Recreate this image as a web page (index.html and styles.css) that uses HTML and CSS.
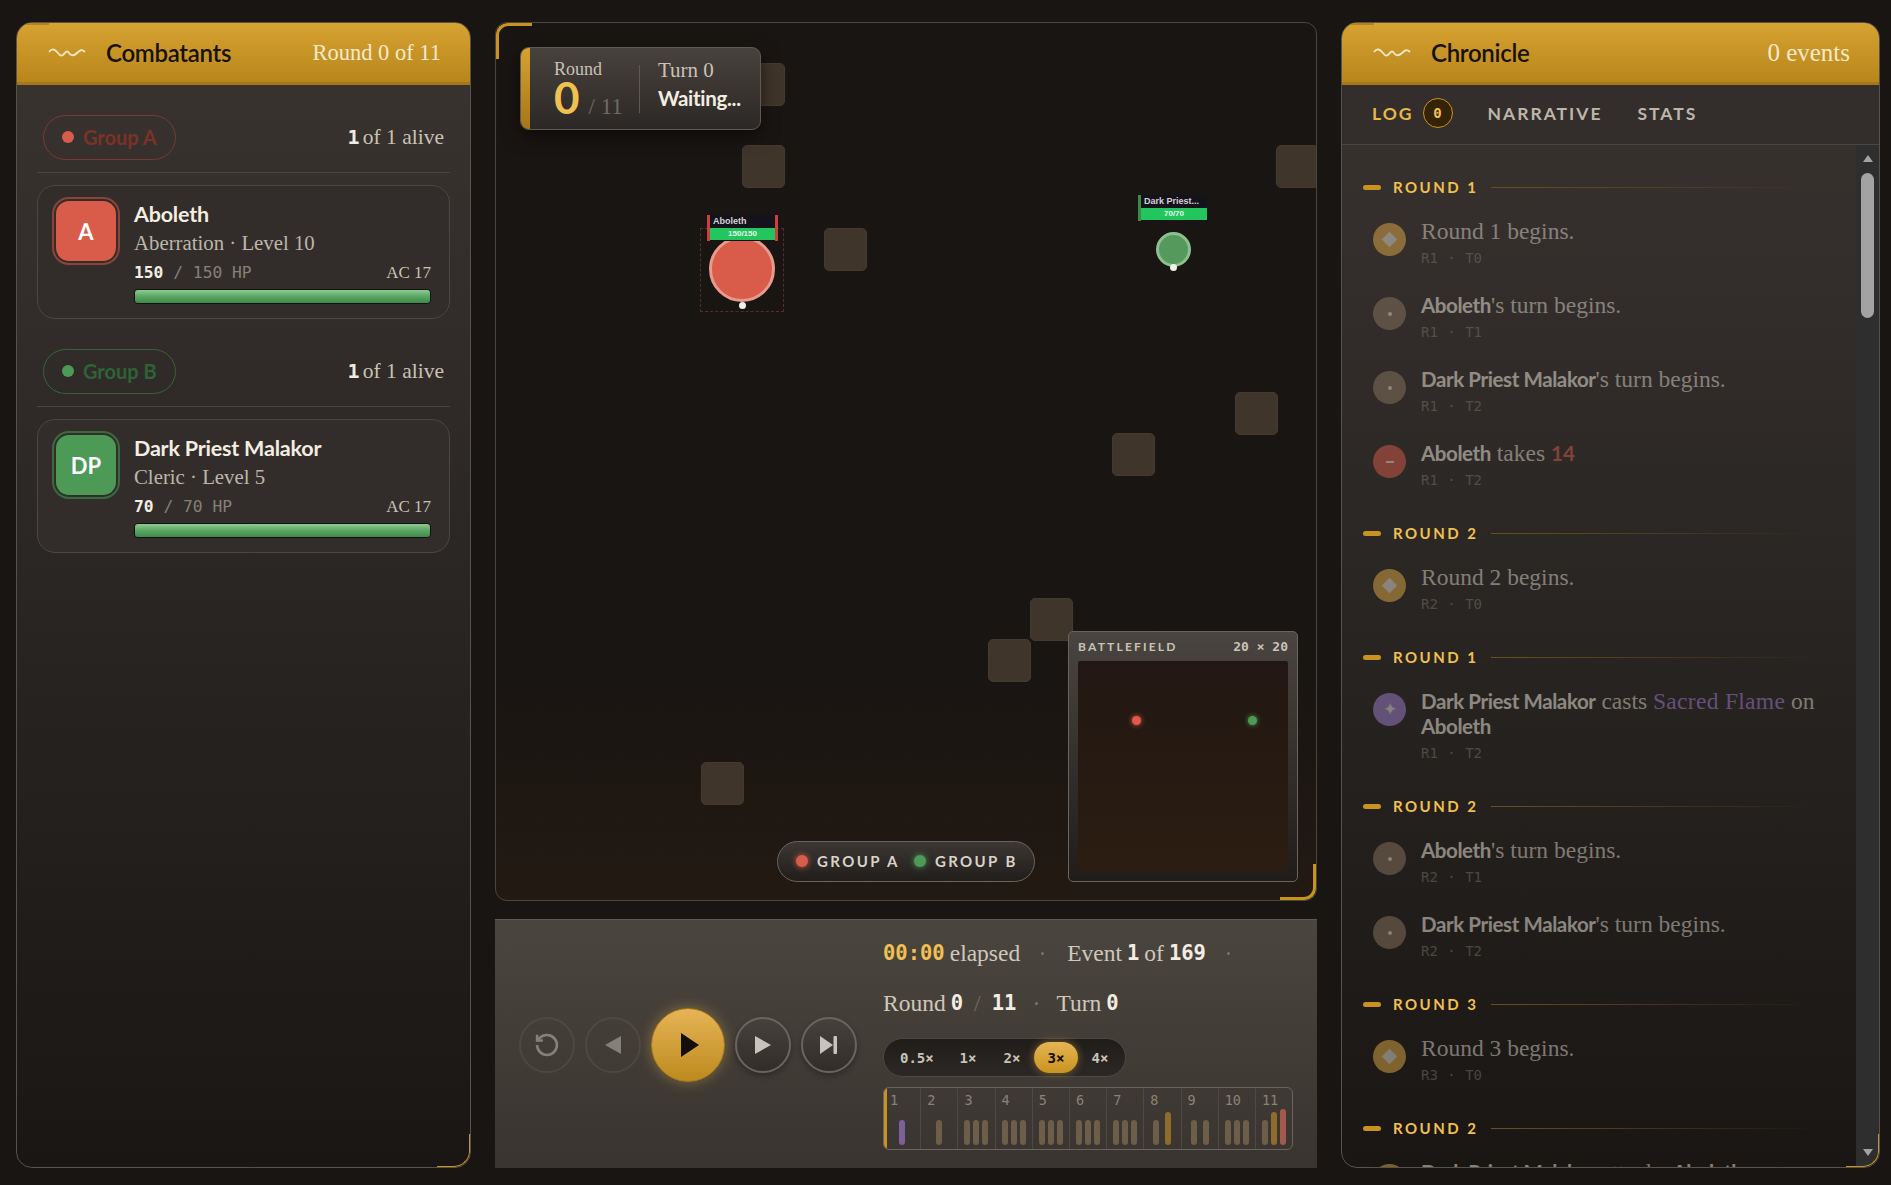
FILE: index.html
```html
<!DOCTYPE html>
<html lang="en">
<head>
    <meta charset="UTF-8">
    <meta name="viewport" content="width=device-width, initial-scale=1.0">
    <title>Combat Replay</title>
    <link rel="stylesheet" href="styles.css">
</head>
<body>
    <div class="app">
        <aside class="panel">
            <header class="panel-head">
                <svg class="wave" viewBox="0 0 38 12" aria-hidden="true"><path d="M1 5 C4 1 7 2 10 6 S14 9 17 6 C18 4 20 4 21 6 C23 9 26 9 29 6 S34 2 37 5"/></svg>
                <h2>Combatants</h2>
                <span class="head-note">Round 0 of 11</span>
            </header>
            <div class="roster">
                <section class="group">
                    <div class="group-row">
                        <span class="group-pill pill-a"><i></i>Group A</span>
                        <span class="alive"><b>1</b> of 1 alive</span>
                    </div>
                    <article class="card">
                        <div class="avatar avatar-a">A</div>
                        <div class="card-body">
                            <h3>Aboleth</h3>
                            <p class="card-sub">Aberration · Level 10</p>
                            <div class="hp-row">
                                <span class="hp-text"><b>150</b> / 150 HP</span>
                                <span class="ac">AC 17</span>
                            </div>
                            <div class="hp-bar"><div class="hp-fill"></div></div>
                        </div>
                    </article>
                </section>
                <section class="group">
                    <div class="group-row">
                        <span class="group-pill pill-b"><i></i>Group B</span>
                        <span class="alive"><b>1</b> of 1 alive</span>
                    </div>
                    <article class="card">
                        <div class="avatar avatar-b">DP</div>
                        <div class="card-body">
                            <h3>Dark Priest Malakor</h3>
                            <p class="card-sub">Cleric · Level 5</p>
                            <div class="hp-row">
                                <span class="hp-text"><b>70</b> / 70 HP</span>
                                <span class="ac">AC 17</span>
                            </div>
                            <div class="hp-bar"><div class="hp-fill"></div></div>
                        </div>
                    </article>
                </section>
            </div>
        </aside>

        <main class="stage">
            <div class="arena">
                <div class="obstacle" style="left:246px;top:40px"></div>
                <div class="obstacle" style="left:246px;top:122px"></div>
                <div class="obstacle" style="left:328px;top:205px"></div>
                <div class="obstacle" style="left:780px;top:122px"></div>
                <div class="obstacle" style="left:739px;top:369px"></div>
                <div class="obstacle" style="left:616px;top:410px"></div>
                <div class="obstacle" style="left:534px;top:575px"></div>
                <div class="obstacle" style="left:492px;top:616px"></div>
                <div class="obstacle" style="left:205px;top:739px"></div>

                <div class="hud">
                    <div class="hud-round">
                        <span class="hud-label">Round</span>
                        <div class="hud-num"><strong>0</strong><span>/ 11</span></div>
                    </div>
                    <div class="hud-turn">
                        <span class="hud-label hud-label-turn">Turn 0</span>
                        <strong>Waiting...</strong>
                    </div>
                </div>

                <div class="token-zone"></div>
                <div class="token-label label-a">
                    <span>Aboleth</span>
                    <div class="token-hp">150/150</div>
                </div>
                <div class="token token-a"><i></i></div>

                <div class="token-label label-b">
                    <span>Dark Priest...</span>
                    <div class="token-hp">70/70</div>
                </div>
                <div class="token token-b"><i></i></div>

                <div class="legend">
                    <span class="legend-item"><i class="dot-a"></i>GROUP A</span>
                    <span class="legend-item"><i class="dot-b"></i>GROUP B</span>
                </div>

                <div class="minimap">
                    <div class="minimap-head"><span>BATTLEFIELD</span><code>20 × 20</code></div>
                    <div class="minimap-map">
                        <i class="mini-a"></i>
                        <i class="mini-b"></i>
                    </div>
                </div>
            </div>

            <div class="controls">
                <div class="transport">
                    <button class="ctl ctl-off" aria-label="Restart">
                        <svg width="28" height="28" viewBox="0 0 24 24" class="icon-line"><path d="M3.5 12a8.5 8.5 0 1 0 8.5-8.5 9.2 9.2 0 0 0-6.4 2.6L3.5 8.2"/><path d="M3.5 3.2v5h5"/></svg>
                    </button>
                    <button class="ctl ctl-off" aria-label="Step back">
                        <svg width="18" height="20" viewBox="0 0 18 20"><path d="M17 1v18L1 10z"/></svg>
                    </button>
                    <button class="ctl-play" aria-label="Play">
                        <svg width="20" height="24" viewBox="0 0 20 24"><path d="M1 0v24l18-12z"/></svg>
                    </button>
                    <button class="ctl" aria-label="Step forward">
                        <svg width="18" height="20" viewBox="0 0 18 20"><path d="M1 1v18l16-9z"/></svg>
                    </button>
                    <button class="ctl" aria-label="Skip to end">
                        <svg width="20" height="20" viewBox="0 0 20 20"><path d="M1 1v18l13-9z"/><rect x="14.5" y="1" width="3.5" height="18" rx="1"/></svg>
                    </button>
                </div>
                <div class="readout">
                    <div class="line">
                        <code class="clock">00:00</code><span>elapsed</span>
                        <i class="sep sep-a"></i>
                        <span>Event</span> <code>1</code> <span>of</span> <code>169</code>
                        <i class="sep sep-b"></i>
                    </div>
                    <div class="line line-two">
                        <span>Round</span> <code>0</code><em>/</em><code>11</code>
                        <i class="sep sep-c"></i>
                        <span>Turn</span> <code>0</code>
                    </div>
                    <div class="speeds">
                        <button>0.5×</button>
                        <button>1×</button>
                        <button>2×</button>
                        <button class="speed-on">3×</button>
                        <button>4×</button>
                    </div>
                    <div class="timeline">
                        <div class="tl-cell tl-first"><span>1</span><div class="bars"><i class="bar-spell"></i></div></div>
                        <div class="tl-cell"><span>2</span><div class="bars"><i></i></div></div>
                        <div class="tl-cell"><span>3</span><div class="bars"><i></i><i></i><i></i></div></div>
                        <div class="tl-cell"><span>4</span><div class="bars"><i></i><i></i><i></i></div></div>
                        <div class="tl-cell"><span>5</span><div class="bars"><i></i><i></i><i></i></div></div>
                        <div class="tl-cell"><span>6</span><div class="bars"><i></i><i></i><i></i></div></div>
                        <div class="tl-cell"><span>7</span><div class="bars"><i></i><i></i><i></i></div></div>
                        <div class="tl-cell"><span>8</span><div class="bars bars-wide"><i></i><i class="bar-gold"></i></div></div>
                        <div class="tl-cell"><span>9</span><div class="bars bars-wide"><i></i><i></i></div></div>
                        <div class="tl-cell"><span>10</span><div class="bars"><i></i><i></i><i></i></div></div>
                        <div class="tl-cell"><span>11</span><div class="bars"><i></i><i class="bar-gold"></i><i class="bar-red"></i></div></div>
                    </div>
                </div>
            </div>
        </main>

        <aside class="panel">
            <header class="panel-head">
                <svg class="wave" viewBox="0 0 38 12" aria-hidden="true"><path d="M1 5 C4 1 7 2 10 6 S14 9 17 6 C18 4 20 4 21 6 C23 9 26 9 29 6 S34 2 37 5"/></svg>
                <h2>Chronicle</h2>
                <span class="head-note note-events">0 events</span>
            </header>
            <nav class="tabs">
                <a class="tab tab-on">LOG</a><span class="tab-badge">0</span>
                <a class="tab">NARRATIVE</a>
                <a class="tab">STATS</a>
            </nav>
            <div class="log-wrap">
                <div class="log">
                    <h4 class="round-head">ROUND 1</h4>
                    <div class="entry"><div class="ev ev-round"><i></i></div><div><p>Round 1 begins.</p><code>R1 · T0</code></div></div>
                    <div class="entry"><div class="ev ev-turn"><i></i></div><div><p><b>Aboleth</b>'s turn begins.</p><code>R1 · T1</code></div></div>
                    <div class="entry"><div class="ev ev-turn"><i></i></div><div><p><b>Dark Priest Malakor</b>'s turn begins.</p><code>R1 · T2</code></div></div>
                    <div class="entry"><div class="ev ev-hit"><i></i></div><div><p><b>Aboleth</b> takes <b class="dmg">14</b></p><code>R1 · T2</code></div></div>

                    <h4 class="round-head">ROUND 2</h4>
                    <div class="entry"><div class="ev ev-round"><i></i></div><div><p>Round 2 begins.</p><code>R2 · T0</code></div></div>

                    <h4 class="round-head">ROUND 1</h4>
                    <div class="entry"><div class="ev ev-spell">✦</div><div><p><b>Dark Priest Malakor</b> casts <span class="spell">Sacred Flame</span> on <b>Aboleth</b></p><code>R1 · T2</code></div></div>

                    <h4 class="round-head">ROUND 2</h4>
                    <div class="entry"><div class="ev ev-turn"><i></i></div><div><p><b>Aboleth</b>'s turn begins.</p><code>R2 · T1</code></div></div>
                    <div class="entry"><div class="ev ev-turn"><i></i></div><div><p><b>Dark Priest Malakor</b>'s turn begins.</p><code>R2 · T2</code></div></div>

                    <h4 class="round-head">ROUND 3</h4>
                    <div class="entry"><div class="ev ev-round"><i></i></div><div><p>Round 3 begins.</p><code>R3 · T0</code></div></div>

                    <h4 class="round-head">ROUND 2</h4>
                    <div class="entry"><div class="ev ev-round"><i></i></div><div><p><b>Dark Priest Malakor</b> attacks <b>Aboleth</b></p><code>R2 · T2</code></div></div>
                </div>
                <div class="scroll" aria-hidden="true">
                    <i class="arrow-up"></i>
                    <div class="scroll-thumb"></div>
                    <i class="arrow-down"></i>
                </div>
            </div>
        </aside>
    </div>
</body>
</html>
```
FILE: styles.css
```css
* {
    box-sizing: border-box;
}
html, body {
    margin: 0;
    height: 100%;
}
body {
    background-color: #181512;
    color: #e8e2d8;
    font-family: "Liberation Serif", serif;
    overflow: hidden;
}
h2, h3, h4, p {
    margin: 0;
}
code {
    font-family: "DejaVu Sans Mono", monospace;
}
button {
    font-family: inherit;
    cursor: pointer;
}
.app {
    display: grid;
    grid-template-columns: 455px 1fr 539px;
    gap: 24px;
    height: 1185px;
    padding: 22px 11px 17px 16px;
}

/* panels */
.panel {
    position: relative;
    display: flex;
    flex-direction: column;
    min-height: 0;
    overflow: hidden;
    border: 1px solid #58524c;
    border-radius: 16px;
    background: linear-gradient(180deg, #3a3431 0%, #2b2724 45%, #191613 100%);
}
.panel::after {
    content: "";
    position: absolute;
    right: 0;
    bottom: 0;
    width: 32px;
    height: 32px;
    border-right: 1.5px solid #c8941f;
    border-bottom: 1.5px solid #c8941f;
    border-bottom-right-radius: 16px;
}
.panel-head {
    position: relative;
    display: flex;
    align-items: center;
    flex: none;
    height: 62px;
    padding: 0 29px 0 31px;
    background: linear-gradient(180deg, #d6a231 0%, #b9861c 100%);
    border-bottom: 3px solid #a5761a;
}
.panel-head::before {
    content: "";
    position: absolute;
    left: 0;
    top: 0;
    width: 32px;
    height: 2px;
    background: #b5831d;
}
.wave {
    width: 38px;
    height: 12px;
    margin-right: 20px;
}
.wave path {
    fill: none;
    stroke: #f4e6c2;
    stroke-width: 1.8;
}
.panel-head h2 {
    font: 600 24px "Lato", sans-serif;
    color: #17110a;
    letter-spacing: -0.3px;
}
.head-note {
    margin-left: auto;
    font-size: 22.5px;
    color: #f6e9c9;
}
.note-events {
    font-size: 25px;
}

/* roster */
.roster {
    padding: 30px 20px 0;
}
.group {
    margin-bottom: 30px;
}
.group-row {
    display: flex;
    align-items: center;
    justify-content: space-between;
    height: 58px;
    padding: 0 6px 13px;
    border-bottom: 1px solid #4a4540;
    margin-bottom: 12px;
}
.group-pill {
    display: flex;
    align-items: center;
    gap: 9px;
    width: 133px;
    height: 45px;
    padding-left: 18px;
    border-radius: 23px;
    font: 700 20px "Lato", sans-serif;
}
.group-pill i {
    width: 12px;
    height: 12px;
    border-radius: 50%;
}
.pill-a {
    border: 1px solid #7a3a30;
    color: #7c3226;
}
.pill-a i {
    background: #d95c4a;
}
.pill-b {
    border: 1px solid #366438;
    color: #2f6237;
}
.pill-b i {
    background: #4c9a55;
}
.alive {
    font-size: 21.5px;
    color: #c9c2b6;
}
.alive b {
    font: 700 20px/20px "DejaVu Sans Mono", monospace;
    color: #f0ebe2;
    letter-spacing: -2px;
}
.card {
    display: flex;
    gap: 18px;
    height: 134px;
    padding: 15px 18px 0 18px;
    border: 1px solid #4c4741;
    border-radius: 18px;
    background: #322d2a;
}
.avatar {
    flex: none;
    display: flex;
    align-items: center;
    justify-content: center;
    width: 60px;
    height: 60px;
    border-radius: 13px;
    font: 700 22px "Lato", sans-serif;
    color: #fff;
}
.avatar-a {
    background: #d95c4a;
    box-shadow: 0 0 0 2px #322d2a, 0 0 0 4px #8a4438;
}
.avatar-b {
    background: #4c9a55;
    box-shadow: 0 0 0 2px #322d2a, 0 0 0 4px #3c6a40;
}
.card-body {
    flex: 1;
}
.card h3 {
    margin-top: -2px;
    font: 700 21.5px/30px "Lato", sans-serif;
    color: #f3ede2;
    letter-spacing: -0.2px;
}
.card-sub {
    font-size: 20.8px;
    line-height: 28px;
    color: #bdb6aa;
}
.hp-row {
    display: flex;
    justify-content: space-between;
    align-items: baseline;
    margin-top: 6px;
    height: 24px;
}
.hp-text {
    font: 16.3px "DejaVu Sans Mono", monospace;
    color: #85807a;
}
.hp-text b {
    color: #f3ede2;
}
.ac {
    font-size: 17px;
    color: #c9c2b6;
}
.hp-bar {
    height: 15px;
    margin-top: 2px;
    border: 1px solid #14110e;
    border-radius: 4px;
    overflow: hidden;
}
.hp-fill {
    height: 100%;
    background: linear-gradient(180deg, #8fca93 0%, #5aa663 50%, #3f8a4a 100%);
}

/* arena */
.stage {
    display: grid;
    grid-template-rows: 1fr 249px;
    gap: 18px;
    min-height: 0;
}
.arena {
    position: relative;
    overflow: hidden;
    border: 1px solid #4a4540;
    border-radius: 12px;
    background:
        repeating-linear-gradient(90deg, rgba(255,255,255,0.005) 0 1px, transparent 1px 41px),
        repeating-linear-gradient(0deg, rgba(255,255,255,0.005) 0 1px, transparent 1px 41px),
        linear-gradient(180deg, #191512 0%, #191512 75%, #221912 100%);
}
.arena::before, .arena::after {
    content: "";
    position: absolute;
    width: 33px;
    height: 33px;
    z-index: 5;
}
.arena::before {
    left: 0;
    top: 0;
    border-left: 3px solid #c8941f;
    border-top: 3px solid #c8941f;
    border-top-left-radius: 12px;
}
.arena::after {
    right: 0;
    bottom: 0;
    border-right: 3px solid #c8941f;
    border-bottom: 3px solid #c8941f;
    border-bottom-right-radius: 12px;
}
.obstacle {
    position: absolute;
    width: 43px;
    height: 43px;
    border-radius: 5px;
    background: #3f352b;
    border: 1px solid #443a30;
}
.hud {
    position: absolute;
    left: 24px;
    top: 24px;
    display: flex;
    align-items: center;
    width: 241px;
    height: 83px;
    padding-left: 9px;
    border: 1px solid #5f5952;
    border-radius: 9px;
    background: linear-gradient(180deg, #48423d 0%, #2c2825 100%);
    box-shadow: 0 6px 18px rgba(0,0,0,0.5);
    overflow: hidden;
}
.hud::before {
    content: "";
    position: absolute;
    left: 0;
    top: 0;
    bottom: 0;
    width: 9px;
    background: linear-gradient(180deg, #d6a231 0%, #a5761a 100%);
}
.hud-round {
    width: 110px;
    height: 48px;
    padding-left: 24px;
    border-right: 1px solid #5f5952;
}
.hud-label {
    display: block;
    margin-top: -4px;
    font-size: 18px;
    line-height: 17px;
    color: #c9c2b6;
}
.hud-num {
    display: flex;
    align-items: baseline;
    gap: 9px;
    margin-top: 1px;
}
.hud-num strong {
    font: 700 44px/36px "Lato", sans-serif;
    color: #f0c050;
}
.hud-num span {
    font-size: 23px;
    color: #6f6a64;
}
.hud-turn {
    padding-left: 18px;
    margin-top: -3px;
}
.hud-label-turn {
    font-size: 21px;
    line-height: 25px;
}
.hud-turn strong {
    display: block;
    font: 700 20.5px/30px "Lato", sans-serif;
    color: #f3ede2;
    letter-spacing: -0.3px;
}
.token-zone {
    position: absolute;
    left: 204px;
    top: 205px;
    width: 84px;
    height: 84px;
    border: 1px dashed #5a2c26;
}
.token {
    position: absolute;
    border-radius: 50%;
}
.token i {
    position: absolute;
    left: 50%;
    width: 7px;
    height: 7px;
    margin-left: -3.5px;
    border-radius: 50%;
    background: #f2f0ea;
}
.token-a {
    left: 213px;
    top: 213px;
    width: 66px;
    height: 66px;
    background: #d95c4a;
    border: 3px solid #e89a8c;
}
.token-a i {
    bottom: -9.5px;
}
.token-b {
    left: 660px;
    top: 209px;
    width: 35px;
    height: 35px;
    background: #55995c;
    border: 3px solid #8cc090;
}
.token-b i {
    bottom: -6.5px;
}
.token-label {
    position: absolute;
    z-index: 2;
    height: 26px;
    background: #14121a;
    font: 700 9px/13px "Liberation Sans", sans-serif;
    color: #d5d0da;
}
.token-label span {
    display: block;
    padding-left: 3px;
}
.label-a {
    left: 211px;
    top: 192px;
    width: 71px;
    border-left: 3px solid #c9403c;
    border-right: 3px solid #c9403c;
}
.label-b {
    left: 642px;
    top: 172px;
    width: 69px;
    border-left: 3px solid #3c8a48;
}
.token-hp {
    height: 12px;
    background: #22c55e;
    color: #eafbef;
    font-size: 8px;
    line-height: 12px;
    text-align: center;
}
.legend {
    position: absolute;
    left: 281px;
    top: 818px;
    display: flex;
    align-items: center;
    gap: 14px;
    width: 258px;
    height: 41px;
    padding: 0 0 2px 18px;
    border: 1px solid #6a645e;
    border-radius: 21px;
    background: linear-gradient(180deg, #3c3733 0%, #201d1b 100%);
}
.legend-item {
    display: flex;
    align-items: center;
    gap: 9px;
    font: 700 15px "Lato", sans-serif;
    letter-spacing: 2.4px;
    color: #d9d3c8;
}
.legend-item i {
    width: 12px;
    height: 12px;
    border-radius: 50%;
}
.dot-a {
    background: #d95c4a;
    box-shadow: 0 0 6px #d95c4a;
}
.dot-b {
    background: #4c9a55;
    box-shadow: 0 0 6px #4c9a55;
}
.minimap {
    position: absolute;
    left: 572px;
    top: 608px;
    width: 230px;
    height: 251px;
    padding: 0 9px;
    border: 1px solid #6a645e;
    border-radius: 5px;
    background: linear-gradient(180deg, #4a4540 0%, #1f1c1a 100%);
}
.minimap-head {
    display: flex;
    align-items: center;
    justify-content: space-between;
    height: 29px;
    font: 700 12px "Lato", sans-serif;
    letter-spacing: 2.2px;
    color: #c9c2b6;
}
.minimap-head code {
    font-size: 13px;
    font-weight: 700;
    letter-spacing: 0;
}
.minimap-map {
    position: relative;
    height: 210px;
    border-radius: 2px;
    background: linear-gradient(180deg, #221713 0%, #2b1d11 100%);
}
.minimap-map i {
    position: absolute;
    top: 55px;
    width: 9px;
    height: 9px;
    border-radius: 50%;
}
.mini-a {
    left: 54px;
    background: #e0594a;
    box-shadow: 0 0 5px #d95c4a;
}
.mini-b {
    left: 170px;
    background: #4c9a55;
    box-shadow: 0 0 5px #4c9a55;
}

/* playback controls */
.controls {
    display: flex;
    align-items: center;
    padding-left: 24px;
    border-top: 1px solid #5f5952;
    background: linear-gradient(180deg, #4b453f 0%, #39342f 100%);
}
.transport {
    display: flex;
    align-items: center;
    gap: 10px;
    width: 364px;
    margin-top: 2px;
}
.ctl {
    display: flex;
    align-items: center;
    justify-content: center;
    width: 56px;
    height: 56px;
    padding: 0;
    border: 2px solid #6a645e;
    border-radius: 50%;
    background: linear-gradient(180deg, #47413c 0%, #322d29 100%);
    box-shadow: 0 3px 6px rgba(0,0,0,0.3);
}
.ctl svg {
    fill: #c8c4bc;
}
.ctl-off {
    opacity: 0.5;
    border-color: #5a544e;
    background: none;
    box-shadow: none;
}
.ctl-off .icon-line {
    fill: none;
    stroke: #c8c4bc;
    stroke-width: 2.2;
}
.ctl-play {
    display: flex;
    align-items: center;
    justify-content: center;
    width: 74px;
    height: 74px;
    padding: 0 0 0 3px;
    border: 1px solid #a87a1c;
    border-radius: 50%;
    background: linear-gradient(180deg, #e6b455 0%, #bd8a1e 100%);
    box-shadow: 0 0 14px rgba(232,184,74,0.4);
}
.ctl-play svg {
    fill: #120e08;
}
.readout {
    width: 410px;
}
.line {
    display: flex;
    align-items: center;
    gap: 5px;
    height: 30px;
    font-size: 23.5px;
    color: #cfc8bc;
}
.line code {
    font-size: 20.5px;
    font-weight: 700;
    color: #f3ede2;
}
.line .clock {
    color: #f0c050;
}
.line-two {
    margin-top: 20px;
}
.line em {
    font-size: 24px;
    font-style: normal;
    color: #6f6a64;
    margin: 0 6px;
}
.sep {
    width: 3px;
    height: 3px;
    border-radius: 50%;
    background: #7a7570;
}
.sep-a {
    margin: 0 18px 0 16px;
}
.sep-b {
    margin-left: 16px;
}
.sep-c {
    margin: 0 13px 0 14px;
}
.speeds {
    display: flex;
    width: 243px;
    height: 39px;
    margin-top: 20px;
    padding: 3px;
    border: 1px solid #4c4741;
    border-radius: 20px;
    background: linear-gradient(180deg, #1f1c1a 0%, #2c2825 100%);
}
.speeds button {
    min-width: 44px;
    height: 31px;
    padding: 0 13px;
    border: 0;
    border-radius: 16px;
    background: none;
    font: 700 14px "DejaVu Sans Mono", monospace;
    color: #c9c2b6;
}
.speeds .speed-on {
    background: linear-gradient(180deg, #e6b455 0%, #c8941f 100%);
    box-shadow: 0 0 8px rgba(232,184,74,0.45);
    color: #120e08;
}
.timeline {
    display: flex;
    height: 63px;
    margin-top: 10px;
    border: 1px solid #6a645e;
    border-radius: 6px;
    overflow: hidden;
}
.tl-cell {
    flex: 1;
    display: flex;
    flex-direction: column;
    border-right: 1px solid #4e4944;
    padding-top: 4px;
}
.tl-cell:last-child {
    border-right: 0;
}
.tl-first {
    box-shadow: inset 3px 0 0 #c8941f;
}
.tl-cell span {
    padding-left: 6px;
    font: 13.5px/16px "DejaVu Sans Mono", monospace;
    color: #8a8278;
}
.bars {
    flex: 1;
    display: flex;
    justify-content: center;
    align-items: flex-end;
    gap: 3px;
    padding-bottom: 4px;
}
.bars-wide {
    gap: 6px;
}
.bars i {
    width: 6px;
    height: 25px;
    border-radius: 3px;
    background: #6c5e49;
}
.bars .bar-spell {
    background: #7d5f9a;
}
.bars .bar-gold {
    height: 33px;
    background: #8e6d2c;
}
.bars .bar-red {
    height: 36px;
    background: #a05a4e;
}

/* chronicle */
.tabs {
    flex: none;
    display: flex;
    align-items: center;
    height: 60px;
    padding: 0 0 3px 30px;
    border-bottom: 1px solid #4a4540;
    background: #332e2b;
}
.tab {
    font: 700 17.5px "Lato", sans-serif;
    letter-spacing: 2px;
    color: #bdb6aa;
    margin-right: 35px;
}
.tab-on {
    color: #e8b84a;
    margin-right: 9px;
}
.tab-badge {
    width: 30px;
    height: 30px;
    margin-right: 35px;
    border: 1px solid #c8941f;
    border-radius: 50%;
    background: #352307;
    font: 700 14px/28px "DejaVu Sans Mono", monospace;
    color: #f0c050;
    text-align: center;
}
.log-wrap {
    flex: 1;
    display: flex;
    min-height: 0;
}
.log {
    flex: 1;
    overflow: hidden;
    padding: 25px 0 0 21px;
}
.round-head {
    display: flex;
    align-items: center;
    height: 20px;
    margin: 7px 37px 23px 0;
    font: 700 15px/20px "Lato", sans-serif;
    letter-spacing: 2.5px;
    color: #f0c050;
}
.round-head::before {
    content: "";
    width: 18px;
    height: 5px;
    margin-right: 12px;
    border-radius: 3px;
    background: #c8941f;
}
.round-head::after {
    content: "";
    flex: 1;
    height: 1px;
    margin-left: 12px;
    background: linear-gradient(90deg, #6b4f1c 0%, rgba(107,79,28,0) 100%);
}
.entry {
    display: flex;
    gap: 15px;
    padding: 0 20px 27px 10px;
    opacity: 0.5;
}
.entry p {
    margin-top: -1px;
    font-size: 23.5px;
    line-height: 25px;
    color: #dad4ca;
}
.entry b {
    font: 700 20.5px/25px "Lato", sans-serif;
    letter-spacing: -0.4px;
    color: #f3ede2;
}
.entry b.dmg {
    color: #d95c4a;
    letter-spacing: 0;
}
.entry code {
    display: block;
    margin-top: 5px;
    font-size: 14px;
    line-height: 18px;
    word-spacing: 1px;
    color: #77726c;
}
.spell {
    color: #a080d0;
    letter-spacing: 0.3px;
}
.ev {
    flex: none;
    display: flex;
    align-items: center;
    justify-content: center;
    width: 33px;
    height: 33px;
    margin-top: 3px;
    border-radius: 50%;
    color: #e8e2d8;
    font-size: 17px;
}
.ev-round {
    background: #e0ac48;
}
.ev-round i {
    width: 11px;
    height: 11px;
    background: #e8e2d8;
    transform: rotate(45deg);
}
.ev-turn {
    background: #8a7660;
}
.ev-turn i {
    width: 4px;
    height: 4px;
    background: #e8e2d8;
    border-radius: 50%;
}
.ev-hit {
    background: #d95c4a;
}
.ev-hit i {
    width: 8px;
    height: 2px;
    background: #f0e0d8;
}
.ev-spell {
    background: #a080d0;
}
.scroll {
    flex: none;
    display: flex;
    flex-direction: column;
    align-items: center;
    width: 23px;
    padding-top: 10px;
    background: #2e2e2e;
}
.arrow-up, .arrow-down {
    width: 0;
    height: 0;
    border-left: 5.5px solid transparent;
    border-right: 5.5px solid transparent;
}
.arrow-up {
    border-bottom: 7px solid #a3a3a3;
}
.arrow-down {
    margin-top: auto;
    margin-bottom: 11px;
    border-top: 7px solid #a3a3a3;
}
.scroll-thumb {
    width: 13px;
    height: 145px;
    margin-top: 11px;
    border-radius: 7px;
    background: #a3a3a3;
}
```
